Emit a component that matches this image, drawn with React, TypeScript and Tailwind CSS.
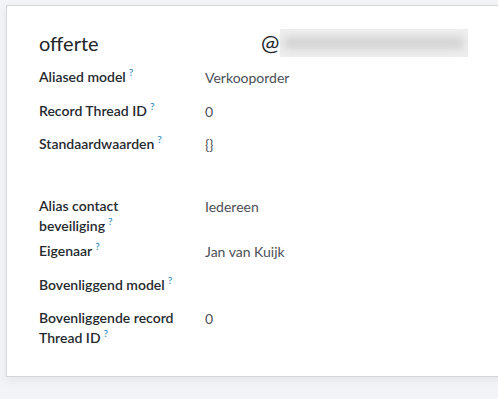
import React from "react";

const Q = () => (
  <span className="ml-[3px] inline-block align-top text-[10px] leading-[12px] font-semibold text-[#3a8fc4] relative top-[-1px]">?</span>
);

function Row({ label, value }: { label: React.ReactNode; value?: string }) {
  return (
    <div className="flex min-h-[33.5px]">
      <div className="w-[140px] shrink-0 pb-[6px] text-[14px] leading-[19.5px] font-semibold text-[#262a2f]">
        {label}
      </div>
      <div className="ml-[26px] pt-[1px] text-[14px] leading-[19.5px] text-[#4b5058]">{value}</div>
    </div>
  );
}

export default function App() {
  return (
    <div className="w-[498px] h-[399px] overflow-hidden bg-[#f3f4f7] pt-[5px] pl-[6px]" style={{ fontFamily: "Lato, 'Noto Sans', sans-serif" }}>
      <div className="w-[520px] h-[372px] bg-white border border-[#d3d5d9] shadow-[0_4px_10px_rgba(0,0,0,0.06)] pl-[32px] pt-[22px]">
        <div className="flex items-center h-[30px]">
          <div className="w-[222px] text-[20px] leading-[30px] text-[#212529]">offerte</div>
          <div className="text-[22px] leading-[30px] text-[#212529]">@</div>
          <div className="ml-[1px] w-[188px] h-[28px] bg-[#eeeeee] flex items-center px-[4px] overflow-hidden">
            <div className="w-full h-[12px] bg-[#d2d2d2] blur-[4px] rounded" />
          </div>
        </div>
        <div className="mt-[9px]">
          <Row label={<>Aliased model<Q /></>} value="Verkooporder" />
          <Row label={<>Record Thread ID<Q /></>} value="0" />
          <Row label={<>Standaardwaarden<Q /></>} value="{}" />
          <div className="h-[28.5px]" />
          <Row label={<>Alias contact beveiliging<Q /></>} value="Iedereen" />
          <Row label={<>Eigenaar<Q /></>} value="Jan van Kuijk" />
          <Row label={<>Bovenliggend model<Q /></>} />
          <Row label={<>Bovenliggende record Thread ID<Q /></>} value="0" />
        </div>
      </div>
    </div>
  );
}
